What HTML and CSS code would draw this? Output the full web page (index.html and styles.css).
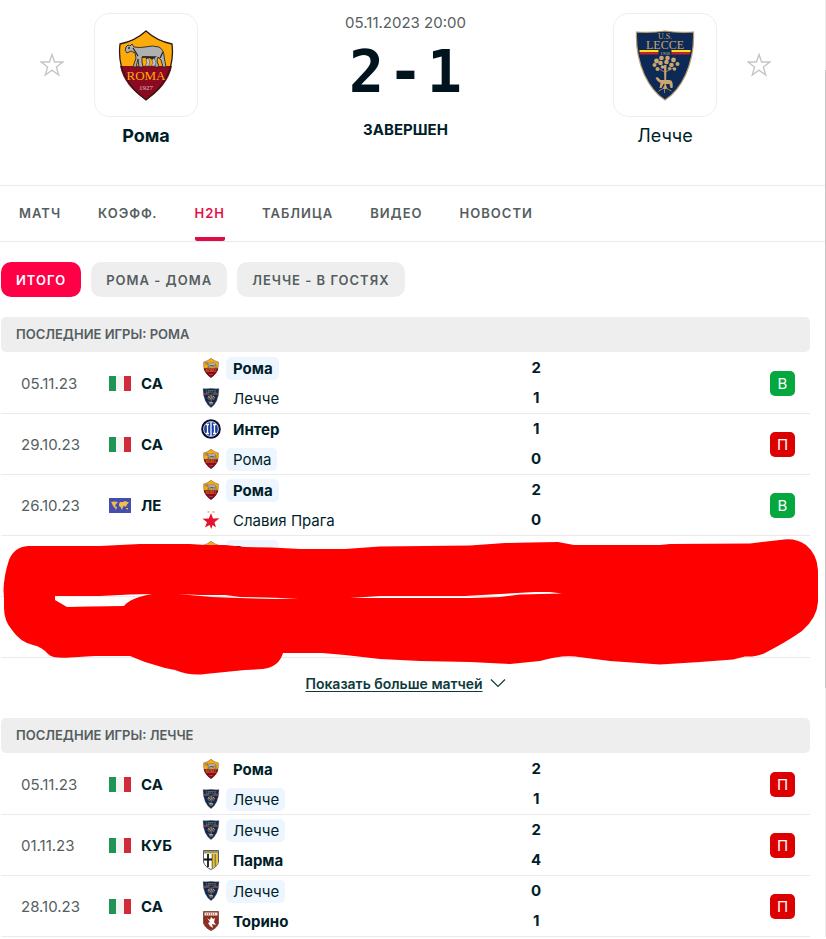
FILE: index.html
```html
<!DOCTYPE html>
<html lang="ru">
<head>
  <meta charset="UTF-8" />
  <meta name="viewport" content="width=device-width, initial-scale=1.0" />
  <title>Рома - Лечче</title>
  <link rel="stylesheet" href="styles.css">
</head>
<body>
  <svg class="sprite" aria-hidden="true">
    <symbol id="star" viewBox="0 0 24 24">
      <path d="M12 1.500 14.600 9H22.800L16.400 13.900 18.700 22 12 17.200 5.300 22 7.600 13.900 1.200 9H9.400Z" fill="none" stroke="#c3c7c7" stroke-width="1.4" />
    </symbol>
    <symbol id="roma" viewBox="0 0 56 71">
      <path d="M28 1Q17 11 2 14Q-2 48 28 70Q58 48 54 14Q39 11 28 1Z" fill="#fdab0a" />
      <path d="M2 36Q6 56 28 70Q50 56 54 36Z" fill="#8c0a20" />
      <path d="M28 1Q17 11 2 14Q-2 48 28 70Q58 48 54 14Q39 11 28 1Z" fill="none" stroke="#2a1a12" stroke-width="1.3" />
      <path d="M8 17 10 15 12 16 14 14 16 17Q22 18 27 17Q35 15 41 17Q46 20 46 26Q47 32 48 37H45L43 30 40 27 39 31 41 37H37L36 28Q29 26 24 27L24 32 25 37H21L20 29 18 37H15L18 28 17 23 13 21 9 23Q6 21 8 17Z" fill="#aeb0b2" stroke="#292526" stroke-width=".9" />
      <path d="M15 18 20 26M24 27H37L34 29 31 27 28 29M10 18H12M45 22 42 28" fill="none" stroke="#292526" stroke-width="1.3" />
      <path d="M28 30 30 28 32 31 31 36H27L29 33ZM34 30 36 28 38 32 37 36H33L35 33Z" fill="#c6c6c6" stroke="#444" stroke-width=".6" />
      <text x="28" y="50" text-anchor="middle" font-size="13" class="crest-text" fill="#fdab0a">ROMA</text>
      <text x="28" y="60" text-anchor="middle" font-size="7" class="crest-text" fill="#d9c0c4">1927</text>
    </symbol>
    <symbol id="lecce" viewBox="0 0 59 71">
      <path d="M29.500 1Q42 3 58 2Q59 25 50 45Q42 62 29.500 70Q17 62 9 45Q0 25 1 2Q17 3 29.500 1Z" fill="#0d2a56" stroke="#b89a6b" stroke-width="1.2" />
      <path d="M4 20H23V22H4ZM36 20H55V22H36Z" fill="#ffe01b" />
      <path d="M4 22H23V24.500H5ZM36 22H55L54 24.500H36Z" fill="#c02330" />
      <text x="29.500" y="9" text-anchor="middle" font-size="8" class="crest-text" fill="#c9a671">U.S.</text>
      <text x="29.500" y="18.500" text-anchor="middle" font-size="12" class="crest-text" fill="#c9a671">LECCE</text>
      <text x="29.500" y="24.500" text-anchor="middle" font-size="5" class="crest-text" fill="#c9a671">1908</text>
      <g fill="#cba76f">
        <circle cx="21" cy="31" r="2.400" /><circle cx="26" cy="28" r="2.300" /><circle cx="32" cy="28" r="2.300" /><circle cx="38" cy="30" r="2.400" />
        <circle cx="19" cy="35" r="2" /><circle cx="25" cy="33" r="2.300" /><circle cx="31" cy="32" r="2.300" /><circle cx="36" cy="35" r="2.300" /><circle cx="42" cy="34" r="2" />
        <circle cx="22" cy="39" r="2" /><circle cx="39" cy="39" r="1.800" /><circle cx="27" cy="37" r="1.800" /><circle cx="34" cy="38.500" r="1.600" />
        <path d="M28.500 35H31L30.500 55 32 59H27L29 55Z" />
        <path d="M20 48 22 47 25 50H34Q38 50 37 58H35L34 54H28L26 58H24L25 53 22 51Z" />
      </g>
      <path d="M29 42 22 38M30 42 38 38M29 58 23 61M30 58 36 61M29 58V63" stroke="#b99561" stroke-width=".8" fill="none" />
    </symbol>
    <symbol id="inter" viewBox="0 0 20 20">
      <circle cx="10" cy="10" r="9.800" fill="#080b2d" />
      <circle cx="10" cy="10" r="7.400" fill="#1b3f9e" stroke="#fff" stroke-width=".8" />
      <path d="M6.500 5V15M5 5.500H8M5 14.500H8M13.500 5V15M12 5.500H15M12 14.500H15M10 3V17" stroke="#fff" stroke-width="1.300" />
    </symbol>
    <symbol id="slavia" viewBox="0 0 20 20">
      <path d="M10 3 12 8.500 18.500 8.200 13.500 12.300 15 17.500 11.500 15 10.500 19 8.500 15 4 17.500 6 12.300 1.500 8.800 7.800 8.500Z" fill="#e5132f" />
      <path d="M6.500 2H8.500M11.500 2H13.500" stroke="#d8b36a" stroke-width="1.500" />
    </symbol>
    <symbol id="parma" viewBox="0 0 16 20">
      <path d="M.5.500H15.500V12Q14 17 8 19.500Q2 17 .5 12Z" fill="#fff" stroke="#555b73" />
      <path d="M1 1H15V3.500H1Z" fill="#a9974a" />
      <path d="M9 4H15V12Q14 16 9 18.500Z" fill="#e6c431" />
      <path d="M9.200 4V18.500M12.200 4V16.500" stroke="#6b6440" />
      <path d="M5 4V17M1 9.500H9" stroke="#151515" stroke-width="1.800" />
    </symbol>
    <symbol id="torino" viewBox="0 0 16 20">
      <path d="M.5.500H15.500V12Q14 17 8 19.500Q2 17 .5 12Z" fill="#8f2d22" stroke="#81543f" />
      <path d="M1.500 1.500H14.500V4.500H1.500Z" fill="#f2e7df" />
      <path d="M3 3H13" stroke="#8f2d22" stroke-dasharray="1 1" />
      <path d="M4 7 7 9 8 6 10 8 12 7 11 11 13 14 9 13 10 17 7 15 5 12 7 11Z" fill="#fff" />
    </symbol>
    <symbol id="italy" viewBox="0 0 22 15">
      <path d="M0 0H22V15H0Z" fill="#f4f5f2" />
      <path d="M0 0H7V15H0Z" fill="#1f9454" />
      <path d="M15 0H22V15H15Z" fill="#cf2b39" />
    </symbol>
    <symbol id="world" viewBox="0 0 22 15">
      <path d="M0 0H22V15H0Z" fill="#444fad" />
      <path d="M2 4 5 3.500 9 4 7 6 6 8 8 9 7 12 6 10 4 8 3 5.500ZM10 6 11 4 14 4 16 3 20 4.500 18 6.500 17.500 8 16 9 15 7.500 14 9 13 12 11.500 9 10 8ZM17 10 19 10 19 11.500 17 11Z" fill="#f2bd4b" />
    </symbol>
  </svg>

  <div class="page">
    <header class="match">
      <div class="side">
        <button class="fav" aria-label="Рома"><svg><use href="#star" /></svg></button>
        <div class="club winner">
          <a class="crest-box" href="#roma" aria-label="Рома"><svg class="crest-lg"><use href="#roma" /></svg></a>
          <a class="club-name" href="#roma">Рома</a>
        </div>
      </div>
      <div class="result">
        <time>05.11.2023 20:00</time>
        <div class="score"><span>2</span><span>-</span><span>1</span></div>
        <div class="status">ЗАВЕРШЕН</div>
      </div>
      <div class="side">
        <div class="club">
          <a class="crest-box" href="#lecce" aria-label="Лечче"><svg class="crest-lg"><use href="#lecce" /></svg></a>
          <a class="club-name" href="#lecce">Лечче</a>
        </div>
        <button class="fav" aria-label="Лечче"><svg><use href="#star" /></svg></button>
      </div>
    </header>

    <nav class="tabs">
      <a href="#">МАТЧ</a>
      <a href="#">КОЭФФ.</a>
      <a href="#" class="active">H2H</a>
      <a href="#">ТАБЛИЦА</a>
      <a href="#">ВИДЕО</a>
      <a href="#">НОВОСТИ</a>
    </nav>

    <main>
      <div class="filters">
        <button class="active">ИТОГО</button>
        <button>РОМА - ДОМА</button>
        <button>ЛЕЧЧЕ - В ГОСТЯХ</button>
      </div>

      <section class="games">
        <h2>ПОСЛЕДНИЕ ИГРЫ: РОМА</h2>
        <table>
          <tr>
            <td class="date">05.11.23</td>
            <td class="league"><div><svg class="flag"><use href="#italy" /></svg>СА</div></td>
            <td class="teams">
              <div class="team win"><svg><use href="#roma" /></svg><span class="own">Рома</span></div>
              <div class="team"><svg><use href="#lecce" /></svg><span>Лечче</span></div>
            </td>
            <td class="goals"><div>2</div><div>1</div></td>
            <td class="outcome"><span class="badge won">В</span></td>
          </tr>
          <tr>
            <td class="date">29.10.23</td>
            <td class="league"><div><svg class="flag"><use href="#italy" /></svg>СА</div></td>
            <td class="teams">
              <div class="team win"><svg><use href="#inter" /></svg><span>Интер</span></div>
              <div class="team"><svg><use href="#roma" /></svg><span class="own">Рома</span></div>
            </td>
            <td class="goals"><div>1</div><div>0</div></td>
            <td class="outcome"><span class="badge lost">П</span></td>
          </tr>
          <tr>
            <td class="date">26.10.23</td>
            <td class="league"><div><svg class="flag"><use href="#world" /></svg>ЛЕ</div></td>
            <td class="teams">
              <div class="team win"><svg><use href="#roma" /></svg><span class="own">Рома</span></div>
              <div class="team"><svg><use href="#slavia" /></svg><span>Славия Прага</span></div>
            </td>
            <td class="goals"><div>2</div><div>0</div></td>
            <td class="outcome"><span class="badge won">В</span></td>
          </tr>
          <tr>
            <td class="date"></td>
            <td class="league"></td>
            <td class="teams">
              <div class="team win"><svg><use href="#roma" /></svg><span class="own">Рома</span></div>
              <div class="team"></div>
            </td>
            <td class="goals"></td>
            <td class="outcome"></td>
          </tr>
          <tr>
            <td class="date"></td>
            <td class="league"></td>
            <td class="teams"><div class="team"></div><div class="team"></div></td>
            <td class="goals"></td>
            <td class="outcome"></td>
          </tr>
        </table>
        <!-- marker strokes over the last two games -->
        <svg class="marker" viewBox="0 530 826 150" preserveAspectRatio="none" aria-hidden="true">
          <path fill="#f00" fill-rule="evenodd" d="M3.500 590Q4 575 9 560Q14 547 28 546L100 546 140 544 190 544 205 545 225 545 245 547 272 547.500 300 549 345 549 380 546.500 470 545.500 505 543 530 542.500 558 542 574 545 660 545 670 544 750 543.500 780 540Q795 537 806 545Q817 554 818 570V602Q817 618 802 631Q788 641 765 653Q757 657 745 656.500L733 659.500 700 662 660 664.500 610 661 575 656.500Q560 655 540 661L510 664 470 662 420 661 380 659 345 655 322 653H283Q279 667 263 669L245 670 205 674Q190 676 175 670L165 668 155 665 145 662 130 656H95L70 657.500Q53 659 48 654Q42 647 33 645Q20 642 12 630Q4 621 4 608V598Z
            M55 596H100L130 594.500 152 594Q130 598 124 606L90 606.500 67 607 55 600Z
            M178 594 200 595 225 595 240 597 265 597.500 299 598.500 275 599 240 598 212 597Z
            M350 598 380 596H465L500 594 535 592 550 592 562 593.500 520 594.500 500 597 470 598Z" />
        </svg>
      </section>

      <a class="more" href="#">
        <span>Показать больше матчей</span>
        <svg viewBox="0 0 16 10"><path d="M1 1.500 8 8.500 15 1.500" fill="none" stroke="#0f3a3c" stroke-width="1.200" /></svg>
      </a>

      <section class="games">
        <h2>ПОСЛЕДНИЕ ИГРЫ: ЛЕЧЧЕ</h2>
        <table>
          <tr>
            <td class="date">05.11.23</td>
            <td class="league"><div><svg class="flag"><use href="#italy" /></svg>СА</div></td>
            <td class="teams">
              <div class="team win"><svg><use href="#roma" /></svg><span>Рома</span></div>
              <div class="team"><svg><use href="#lecce" /></svg><span class="own">Лечче</span></div>
            </td>
            <td class="goals"><div>2</div><div>1</div></td>
            <td class="outcome"><span class="badge lost">П</span></td>
          </tr>
          <tr>
            <td class="date">01.11.23</td>
            <td class="league"><div><svg class="flag"><use href="#italy" /></svg>КУБ</div></td>
            <td class="teams">
              <div class="team"><svg><use href="#lecce" /></svg><span class="own">Лечче</span></div>
              <div class="team win"><svg><use href="#parma" /></svg><span>Парма</span></div>
            </td>
            <td class="goals"><div>2</div><div>4</div></td>
            <td class="outcome"><span class="badge lost">П</span></td>
          </tr>
          <tr>
            <td class="date">28.10.23</td>
            <td class="league"><div><svg class="flag"><use href="#italy" /></svg>СА</div></td>
            <td class="teams">
              <div class="team"><svg><use href="#lecce" /></svg><span class="own">Лечче</span></div>
              <div class="team win"><svg><use href="#torino" /></svg><span>Торино</span></div>
            </td>
            <td class="goals"><div>0</div><div>1</div></td>
            <td class="outcome"><span class="badge lost">П</span></td>
          </tr>
        </table>
      </section>
    </main>
    <div class="scroll-thumb"></div>
  </div>
</body>
</html>
```
FILE: styles.css
```css
* { box-sizing: border-box; }
body {
  font-family: Inter, 'Liberation Sans', Arial, sans-serif;
  font-size: 15px;
  margin: 0; background-color: #fff; color: #001e28;
}
a { color: inherit; text-decoration: none; }
button {
  font-family: inherit;
  border: none;
  cursor: pointer;
}
.sprite { display: none; }
.crest-text { font-family: 'Liberation Serif', serif; font-weight: 400; }
.page {
  position: relative;
  border-right: 1px solid #ececec;
}
.scroll-thumb {
  position: absolute;
  top: 70px; right: -1px;
  width: 1px; height: 66%;
  background: #c4c4c4;
}

.match {
  display: flex;
  justify-content: space-between;
  align-items: flex-start;
  padding: 13px 54px 37px 40px;
}
.side { display: flex; gap: 30px; }
.fav {
  width: 24px; height: 104px;
  padding: 0;
  background: none;
}
.fav svg { display: block; width: 24px; height: 24px; }
.club {
  display: flex; flex-direction: column;
  align-items: center;
  gap: 6px;
}
.crest-box {
  display: flex;
  justify-content: center; align-items: center;
  width: 104px; height: 104px;
  border: 1px solid #eee;
  border-radius: 15px;
}
.crest-lg { width: 60px; height: 71px; }
.club-name { font-size: 18px; line-height: 25px; }
.winner .club-name { font-weight: 700; }
.result {
  display: flex; flex-direction: column;
  align-items: center;
}
.result time { line-height: 20px; color: #555e61; }
.score {
  display: flex; gap: 4px;
  font-family: 'DejaVu Sans Mono', monospace;
  font-size: 58px; line-height: 78px;
  font-weight: 700;
  color: #00141e;
}
.status {
  line-height: 20px;
  font-weight: 700;
  margin-top: 9px;
}

.tabs {
  display: flex; gap: 37px;
  padding: 0 19px;
  border-top: 1px solid #eaeaea;
  border-bottom: 1px solid #eaeaea;
}
.tabs a {
  font-size: 13px; line-height: 48px;
  font-weight: 600;
  letter-spacing: 1px;
  color: #555e61;
  padding-top: 3px;
  border-bottom: 4px solid transparent;
}
.tabs a.active {
  color: #e5104a;
  border-bottom-color: #dc0e45;
  border-radius: 2px;
}

main { padding: 20px 15px 0 1px; }
.filters { display: flex; gap: 10px; margin-bottom: 20px; }
.filters button {
  height: 35px;
  padding: 0 15px;
  font-size: 13px; font-weight: 600;
  letter-spacing: 1px;
  color: #555e61;
  background: #eee;
  border-radius: 10px;
}
.filters button.active { background: #ff0046; color: #fff; }

.games { position: relative; }
.games h2 {
  margin: 0 0 1px;
  padding: 0 15px;
  font-size: 13px; line-height: 35px;
  font-weight: 600;
  color: #555e61;
  background: #eee;
  border-radius: 5px;
}
table {
  width: 100%;
  table-layout: fixed;
  border-collapse: separate; border-spacing: 0;
}
td {
  height: 61px;
  padding: 0;
  border-bottom: 1px solid #eaeaea;
}
.date { width: 108px; padding-left: 20px; color: #555e61; }
.league { width: 92px; font-weight: 700; }
.league div { display: flex; align-items: center; gap: 10px; }
.flag { width: 22px; height: 15px; }
.team {
  display: flex; align-items: center;
  gap: 5px;
  height: 30px;
}
.team svg { width: 20px; height: 20px; }
.team span {
  padding: 0 6px 0 7px;
  line-height: 23px;
  border-radius: 5px;
}
.team .own { background: #edf5fe; }
.win { font-weight: 700; }
.goals { width: 30px; font-weight: 700; text-align: center; }
.goals div { line-height: 30px; }
.outcome { width: 32%; padding-right: 15px; }
.badge {
  display: block;
  width: 25px;
  margin-left: auto;
  line-height: 25px;
  text-align: center;
  color: #fff;
  border-radius: 5px;
}
.won { background: #04a83f; }
.lost { background: #dc0000; }
.marker {
  position: absolute;
  left: -1px; bottom: -22px;
  width: calc(100% + 17px); height: 150px;
}

.more {
  display: flex;
  justify-content: center; align-items: center;
  gap: 7px;
  height: 60px;
  padding-bottom: 10px;
  font-size: 14px; font-weight: 600;
  color: #0f3a3c;
}
.more span { text-decoration: underline; text-underline-offset: 2px; }
.more svg { width: 16px; height: 10px; }
```
